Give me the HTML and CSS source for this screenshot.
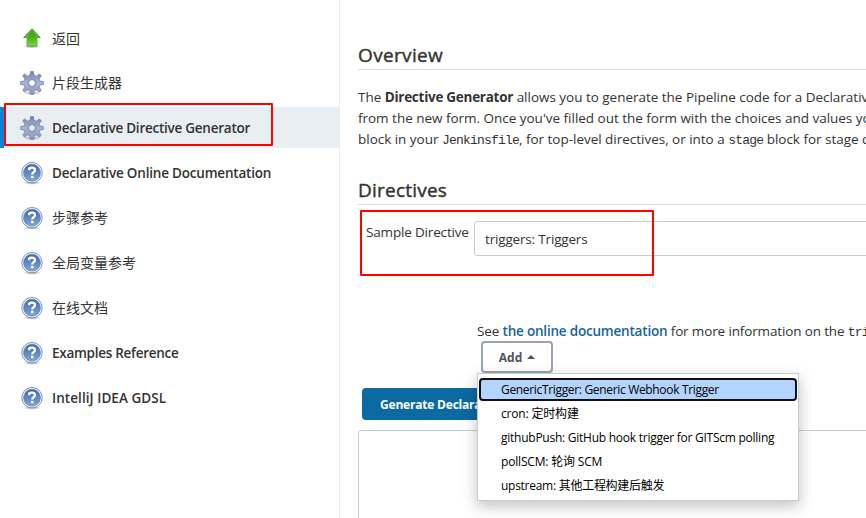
FILE: index.html
```html
<!DOCTYPE html>
<html lang="zh-CN">
<head>
<meta charset="utf-8">
<title>Directive Generator</title>
<link rel="stylesheet" href="styles.css">
</head>
<body>
<svg class="defs" width="0" height="0" aria-hidden="true">
  <defs>
    <linearGradient id="green" x1="0" y1="0" x2="0" y2="1"><stop offset="0" stop-color="#3d9a1c"/><stop offset=".55" stop-color="#4fae20"/><stop offset="1" stop-color="#7ddc1c"/></linearGradient>
    <linearGradient id="steel" x1="0" y1="0" x2="0" y2="1"><stop offset="0" stop-color="#7583aa"/><stop offset=".5" stop-color="#a9b3d2"/><stop offset="1" stop-color="#9695c0"/></linearGradient>
    <linearGradient id="blue" x1="0" y1="0" x2="0" y2="1"><stop offset="0" stop-color="#4169a4"/><stop offset="1" stop-color="#82a5d4"/></linearGradient>
    <radialGradient id="shade"><stop offset="0" stop-color="#000" stop-opacity=".4"/><stop offset="1" stop-color="#000" stop-opacity="0"/></radialGradient>
    <symbol id="up" viewBox="0 0 24 24">
      <ellipse cx="12" cy="20.5" rx="9" ry="2" fill="url(#shade)"/>
      <path d="M12 2.8 20.3 11.5H17V20H7V11.5H3.7Z" fill="url(#green)" stroke="#3f9420" stroke-width=".8" stroke-linejoin="round"/>
      <path d="M12 4.2 18.2 10.7H16.2V19.2H7.8V10.7H5.8Z" fill="none" stroke="#a0dc70" stroke-width=".6" opacity=".7"/>
    </symbol>
    <symbol id="gear" viewBox="0 0 24 24">
      <ellipse cx="12" cy="22" rx="9" ry="2" fill="url(#shade)"/>
      <path fill-rule="evenodd" d="M10.700.5h2.600l.8 3.800 2.200.9 3.200-2.300 1.800 1.800-2.200 3.300.9 2 3.700.7v2.600l-3.700.8-.9 2 2.200 3.200-1.800 1.800-3.200-2.200-2.200.9-.8 3.700h-2.600l-.8-3.700-2.200-.9-3.200 2.200-1.800-1.800 2.200-3.200-.9-2-3.700-.8v-2.600l3.700-.7.9-2-2.200-3.300 1.800-1.800 3.200 2.300 2.200-.9ZM12 8.700a3.300 3.300 0 1 0 0 6.600 3.300 3.300 0 0 0 0-6.600Z" fill="url(#steel)" stroke="#6f7da3" stroke-width=".7" stroke-linejoin="round"/>
      <circle cx="12" cy="12" r="4.200" fill="none" stroke="#8794ba" stroke-width=".8"/>
    </symbol>
    <symbol id="help" viewBox="0 0 24 24">
      <ellipse cx="12" cy="21.8" rx="9" ry="2" fill="url(#shade)"/>
      <circle cx="12" cy="11.7" r="10.2" fill="#fff" stroke="#6384b5" stroke-width=".9"/>
      <circle cx="12" cy="11.7" r="8.5" fill="url(#blue)" stroke="#5377ad" stroke-width=".6"/>
      <path d="M9.2 9.3V7.5Q10.300 6.600 12 6.600Q15 6.600 15 9Q15 10.300 13.500 11.300Q12.300 12 12.300 13.600" fill="none" stroke="#fff" stroke-width="2.3"/>
      <path d="M11 14.800h2.500v2.400H11z" fill="#fff"/>
    </symbol>
  </defs>
</svg>
<div class="page">
  <nav class="side">
    <a class="task"><svg><use href="#up"/></svg><span class="back">返回</span></a>
    <a class="task"><svg><use href="#gear"/></svg><span class="cn">片段生成器</span></a>
    <a class="task active"><svg><use href="#gear"/></svg><span class="en t-gen">Declarative Directive Generator</span></a>
    <a class="task"><svg><use href="#help"/></svg><span class="en t-doc">Declarative Online Documentation</span></a>
    <a class="task"><svg><use href="#help"/></svg><span class="cn">步骤参考</span></a>
    <a class="task"><svg><use href="#help"/></svg><span class="cn">全局变量参考</span></a>
    <a class="task"><svg><use href="#help"/></svg><span class="cn">在线文档</span></a>
    <a class="task"><svg><use href="#help"/></svg><span class="en t-ex">Examples Reference</span></a>
    <a class="task"><svg><use href="#help"/></svg><span class="en t-idea">IntelliJ IDEA GDSL</span></a>
    <div class="mark mark-task"></div>
  </nav>
  <main class="main">
    <h2 class="h-over">Overview</h2>
    <div class="intro">
      <p>The <b>Directive Generator</b> allows you to generate the Pipeline code for a Declarative</p>
      <p>from the new form. Once you've filled out the form with the choices and values you</p>
      <p>block in your <code>Jenkinsfile</code>, for top-level directives, or into a <code>stage</code> block for stage d</p>
    </div>
    <h2 class="h-dir">Directives</h2>
    <div class="field">
      <label>Sample Directive</label>
      <div class="select">triggers: Triggers</div>
      <div class="mark mark-field"></div>
    </div>
    <div class="see">See <a>the online documentation</a> for more information on the <code>tri</code></div>
    <div class="add-wrap">
      <button class="add"><span>Add</span><i></i></button>
      <ul class="menu">
        <li class="sel"><span class="m1">GenericTrigger: Generic Webhook Trigger</span></li>
        <li><span>cron: 定时构建</span></li>
        <li><span class="m3">githubPush: GitHub hook trigger for GITScm polling</span></li>
        <li><span>pollSCM: 轮询 SCM</span></li>
        <li><span class="m5">upstream: 其他工程构建后触发</span></li>
      </ul>
    </div>
    <button class="generate">Generate Declara</button>
    <div class="output"></div>
  </main>
</div>
</body>
</html>
```
FILE: styles.css
```css
* { box-sizing: border-box; }
body {
  margin: 0;
  background: #fff;
  color: #333;
  font: 13.5px/21px "Open Sans", "Noto Sans CJK SC", sans-serif;
  overflow: hidden;
}
.defs { position: absolute; }
.page { display: grid; grid-template-columns: 340px 1fr; width: 866px; height: 518px; overflow: hidden; }
.side { position: relative; border-right: 1px solid #e9eef2; padding-top: 17px; }
.task {
  display: flex; align-items: center; gap: 8px;
  height: 41px; margin-bottom: 4px; padding-left: 20px;
  font-weight: 600; white-space: nowrap;
}
.back, .cn { font-weight: 400; font-size: 14px; }
.back, .en { padding-top: 2px; }
.t-gen { letter-spacing: -.25px; }
.t-doc { letter-spacing: -.2px; }
.t-ex { letter-spacing: -.28px; }
.t-idea { letter-spacing: .06px; }
.task svg { width: 24px; height: 24px; }
.task.active { background: #e9eef2; box-shadow: inset 4px 0 #0b84d0; }
.mark { position: absolute; border: 2px solid #f00; border-radius: 1px; }
.mark-task { left: 4px; top: 103px; width: 269px; height: 43px; }
.main { padding: 43px 0 0 18px; min-width: 0; white-space: nowrap; overflow: hidden; }
h2 { margin: 0; height: 27px; border-bottom: 1px solid #d9dddd; font-size: 19px; line-height: 24px; font-weight: 400; -webkit-text-stroke: .4px #333; }
.h-over { letter-spacing: .35px; }
.h-dir { letter-spacing: .22px; }
.intro { padding-top: 17px; height: 108px; letter-spacing: -.02px; }
.intro p { margin: 0; }
.intro b { letter-spacing: -.27px; }
code { font: 13px/15px "Liberation Mono", monospace; letter-spacing: -.8px; }
.field { position: relative; display: flex; height: 116px; padding: 16px 0 0 8px; letter-spacing: -.17px; }
label { flex: none; width: 108px; padding-top: 1px; }
.select { flex: none; width: 500px; height: 35px; border: 1px solid #ccc; border-radius: 3px; padding: 7px 10px; }
.mark-field { left: 2px; top: 5px; width: 294px; height: 66px; }
.see { padding-left: 119px; height: 20px; letter-spacing: -.14px; }
.see a { color: #15659c; font-weight: 600; letter-spacing: -.2px; }
button { font: 700 12px/20px "Open Sans", sans-serif; padding: 0; }
.add-wrap { position: relative; padding-left: 123px; height: 47px; z-index: 1; }
.add {
  display: flex; align-items: center; justify-content: center; gap: 5px;
  width: 72px; height: 32px; border: 2px solid #98a3ad; border-radius: 4px; background: #fff; color: #4d545d;
}
.add span { padding-top: 2px; }
.add i { border: 4px solid transparent; border-top: 0; border-bottom-color: #4d545d; }
.menu {
  position: absolute; left: 119px; top: 32px; width: 322px; height: 128px;
  margin: 0; padding: 4px 1px; list-style: none;
  background: #fff; border: 1px solid #ccc; box-shadow: 0 5px 14px rgba(0,0,0,.25);
  color: #000; font-size: 12px; line-height: 24px; letter-spacing: -.18px;
}
.m1 { letter-spacing: -.33px; }
.m3 { letter-spacing: -.25px; }
.m5 { letter-spacing: -.27px; }
.menu li { height: 24px; padding-left: 22px; }
.menu .sel { background: #b3d4ff; border: 2px solid #101010; border-radius: 4px; line-height: 20px; padding-left: 20px; height: 23px; margin-bottom: 1px; }
.generate {
  display: block; margin-left: 4px; width: 250px; height: 32px; padding: 2px 0 0 18px; text-align: left;
  border: 0; border-radius: 4px; background: #0b6aa2; color: #fff; letter-spacing: -.2px;
}
.output { width: 600px; height: 200px; margin-top: 10px; border: 1px solid #ccc; border-radius: 3px; }
```
